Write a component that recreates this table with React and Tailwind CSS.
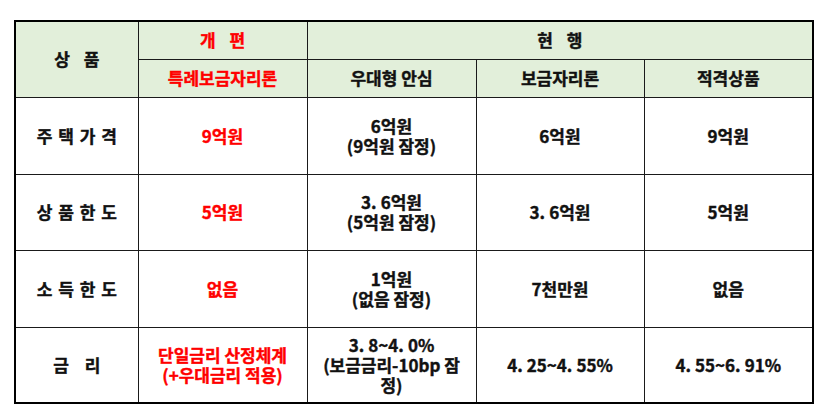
const red = 'text-[#ff0000]'

const rows = [
  {
    label: '주 택 가 격',
    reform: ['9억원'],
    cells: [['6억원', '(9억원 잠정)'], ['6억원'], ['9억원']],
  },
  {
    label: '상 품 한 도',
    reform: ['5억원'],
    cells: [['3.6억원', '(5억원 잠정)'], ['3.6억원'], ['5억원']],
  },
  {
    label: '소 득 한 도',
    reform: ['없음'],
    cells: [['1억원', '(없음 잠정)'], ['7천만원'], ['없음']],
  },
  {
    label: '금 리',
    wide: true,
    reform: ['단일금리 산정체계', '(+우대금리 적용)'],
    cells: [['3.8~4.0%', '(보금금리-10bp 잠', '정)'], ['4.25~4.55%'], ['4.55~6.91%']],
  },
]

// the source font sets a wide gap after a decimal point
function Text({ s }) {
  const parts = s.split('.')
  return parts.map((p, i) => (
    <span key={i}>
      {p}
      {i < parts.length - 1 && <span className="mr-[4px]">.</span>}
    </span>
  ))
}

function Lines({ lines }) {
  return lines.map((l, i) => (
    <span key={i} className="block">
      <Text s={l} />
    </span>
  ))
}

export default function App() {
  const cell = 'border border-[#1a1a1a] text-center align-middle p-0'
  return (
    <div
      className="w-[823px] h-[414px] bg-white pt-[20px] pl-[14px]"
      style={{ fontFamily: '"Noto Sans CJK KR", "Noto Sans", sans-serif' }}
    >
      <table className="border-collapse border-2 border-black table-fixed w-[798px] text-[17px] leading-[20px] font-bold text-[#111] [-webkit-text-stroke:0.4px_currentColor]">
        <colgroup>
          <col className="w-[123px]" />
          <col className="w-[169px]" />
          <col className="w-[169px]" />
          <col className="w-[168px]" />
          <col className="w-[169px]" />
        </colgroup>
        <thead className="bg-[#e2efda]">
          <tr className="h-[38px]">
            <th rowSpan={2} className={`${cell} tracking-[5px] pl-[5px]`}>
              상 품
            </th>
            <th className={`${cell} ${red} tracking-[5px] pl-[5px]`}>개 편</th>
            <th colSpan={3} className={`${cell} tracking-[5px] pl-[5px]`}>
              현 행
            </th>
          </tr>
          <tr className="h-[38px]">
            <th className={`${cell} ${red}`}>특례보금자리론</th>
            <th className={cell}>우대형 안심</th>
            <th className={cell}>보금자리론</th>
            <th className={cell}>적격상품</th>
          </tr>
        </thead>
        <tbody>
          {rows.map((r, i) => (
            <tr key={i} className={i === 1 || i === 3 ? 'h-[76px]' : 'h-[77px]'}>
              <td className={`${cell} ${r.wide ? 'tracking-[6px] pl-[6px]' : 'tracking-[1px] pl-[1px]'}`}>
                {r.label}
              </td>
              <td className={`${cell} ${red}`}>
                <Lines lines={r.reform} />
              </td>
              {r.cells.map((c, j) => (
                <td key={j} className={cell}>
                  <Lines lines={c} />
                </td>
              ))}
            </tr>
          ))}
        </tbody>
      </table>
    </div>
  )
}
